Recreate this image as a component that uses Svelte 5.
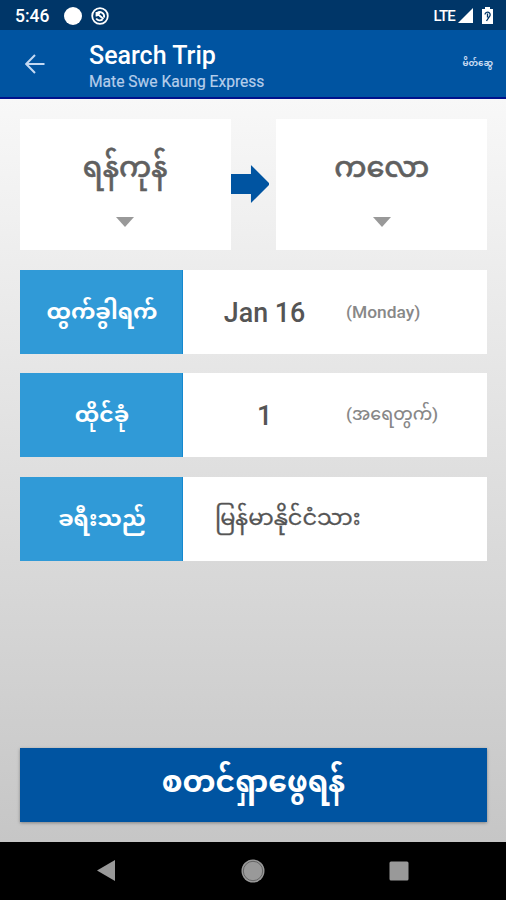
<script lang="ts">
  const places = ["ရန်ကုန်", "ကလော"];

  const rows = [
    { label: "ထွက်ခွါရက်", value: "Jan 16", note: "(Monday)" },
    { label: "ထိုင်ခုံ", value: "1", note: "(အရေတွက်)" },
  ];
</script>

<div class="screen">
  <div class="status">
    <span class="time">5:46</span>
    <svg class="dot" viewBox="0 0 18 18"><circle cx="9" cy="9" r="9" /></svg>
    <svg class="sync" viewBox="0 0 18 18">
      <circle cx="9" cy="9" r="7.8" />
      <path d="M5.200 11.500a4.300 4.300 0 0 0 6.300 1M13 10.500a4.300 4.300 0 0 0-7-4.300M5.500 6l7 6M5.500 9.500v-3.500h3.500" />
    </svg>
    <span class="lte">LTE</span>
    <svg class="signal" viewBox="0 0 16 16"><path d="M16 0v16H0z" /></svg>
    <svg class="battery" viewBox="0 0 11 17">
      <path class="shell" d="M3 2V0h5v2h3v15H0V2z" />
      <path class="mark" d="M3 7.500a2.600 2.600 0 1 1 4.500 2L4.500 14M5.500 6.500v4" />
    </svg>
  </div>

  <header>
    <button class="back" title="Back">
      <svg viewBox="0 0 20 20"><path d="M19.500 10H1.500M10 1 1.200 10l8.800 9" /></svg>
    </button>
    <div class="titles">
      <h1>Search Trip</h1>
      <p>Mate Swe Kaung Express</p>
    </div>
    <span class="mate">မိတ်ဆွေ</span>
  </header>

  <main>
    <div class="route">
      {#each places as place, i}
        {#if i > 0}
          <svg class="arrow" viewBox="0 0 39 38"><path d="M0 9h20V0l19 19-19 19v-9H0z" /></svg>
        {/if}
        <button class="place">
          <span>{place}</span>
          <svg class="caret" viewBox="0 0 18 10"><path d="M0 0h18l-9 10z" /></svg>
        </button>
      {/each}
    </div>

    {#each rows as row}
      <div class="row">
        <div class="label">{row.label}</div>
        <div class="value">{row.value}</div>
        <div class="note">{row.note}</div>
      </div>
    {/each}

    <div class="row">
      <div class="label">ခရီးသည်</div>
      <div class="nation">မြန်မာနိုင်ငံသား</div>
    </div>

    <button class="search">စတင်ရှာဖွေရန်</button>
  </main>

  <nav>
    <svg viewBox="0 0 24 24"><path d="M21 1v21L3 11.500z" /></svg>
    <svg viewBox="0 0 24 24">
      <circle cx="12" cy="12" r="11.500" />
      <circle class="ring" cx="12" cy="12" r="9.700" />
    </svg>
    <svg viewBox="0 0 24 24"><rect x="2.500" y="2.500" width="19" height="19" rx="1.500" /></svg>
  </nav>
</div>

<style>
  :global(body) {
    margin: 0;
  }

  .screen {
    display: flex;
    flex-direction: column;
    width: 506px;
    height: 900px;
    overflow: hidden;
    font-family: Roboto, "Noto Sans Myanmar", "Noto Sans", sans-serif;
  }

  button {
    border: none;
    padding: 0;
    font-family: inherit;
    cursor: pointer;
  }

  .status {
    display: flex;
    align-items: center;
    box-sizing: border-box;
    height: 30px;
    padding: 1px 13px 0 15px;
    background: #003668;
    color: white;
  }

  .time {
    width: 49px;
    font-size: 17.5px;
    font-weight: 500;
  }

  .dot {
    width: 18px;
    height: 18px;
    fill: white;
  }

  .sync {
    width: 18px;
    height: 18px;
    margin-left: 9px;
    fill: none;
    stroke: white;
    stroke-width: 1.8;
  }

  .lte {
    margin-left: auto;
    font-size: 15px;
    font-weight: 500;
    letter-spacing: -0.8px;
  }

  .signal {
    width: 15px;
    height: 15px;
    margin: 0 9px 0 3px;
    fill: white;
  }

  .battery {
    width: 11px;
    height: 17px;
  }

  .shell {
    fill: white;
  }

  .mark {
    fill: none;
    stroke: #003668;
    stroke-width: 1.3;
  }

  header {
    display: flex;
    box-sizing: border-box;
    height: 69px;
    padding: 0 13px 0 25px;
    border-bottom: 2px solid #00128c;
    background: #0054a1;
    color: white;
  }

  .back {
    width: 64px;
    background: none;
    text-align: left;
  }

  .back svg {
    display: block;
    width: 20px;
    height: 20px;
    margin-top: 1px;
    fill: none;
    stroke: #c3d9f3;
    stroke-width: 2;
  }

  h1 {
    margin: 11px 0 0;
    font-size: 25px;
    font-weight: 500;
    line-height: 30px;
  }

  p {
    margin: 1px 0 0;
    color: #b5cdea;
    font-size: 15.6px;
    line-height: 20px;
    -webkit-text-stroke: 0.2px #b5cdea;
  }

  .mate {
    margin: 23px 0 0 auto;
    color: #c8dbf2;
    font-size: 8.6px;
    font-weight: 700;
    line-height: 20px;
  }

  main {
    display: flex;
    flex: 1;
    flex-direction: column;
    gap: 19.5px;
    padding: 20px 19px 20px 20px;
    background: linear-gradient(#f8f8f8, #c6c6c6);
  }

  .route {
    display: flex;
    justify-content: space-between;
    align-items: center;
    height: 131px;
  }

  .place {
    display: flex;
    flex-direction: column;
    align-items: center;
    width: 211px;
    height: 131px;
    background: white;
    color: #606060;
    font-size: 28.8px;
    font-weight: 500;
    -webkit-text-stroke: 0.5px #606060;
  }

  .place span {
    height: 58px;
    margin-top: 40px;
    line-height: 16px;
  }

  .caret {
    width: 18px;
    height: 10px;
    fill: #999;
  }

  .arrow {
    width: 39px;
    height: 38px;
    margin: 0 7px 2px 0;
    fill: #0054a1;
  }

  .row {
    display: flex;
    align-items: center;
    height: 84px;
    background: white;
  }

  .label {
    box-sizing: border-box;
    width: 163px;
    height: 84px;
    padding-left: 2px;
    background: #309ad7;
    border-right: 1px solid #1488cf;
    color: white;
    font-size: 22px;
    font-weight: 700;
    line-height: 83px;
    text-align: center;
  }

  .value {
    width: 163px;
    padding-top: 2px;
    color: #555;
    font-size: 26.8px;
    font-weight: 500;
    text-align: center;
  }

  .note {
    padding-top: 1px;
    color: #888;
    font-size: 17.4px;
    font-weight: 500;
  }

  .nation {
    margin: 2px 0 0 32px;
    color: #555;
    font-size: 22.5px;
    -webkit-text-stroke: 0.3px #555;
  }

  .search {
    height: 74px;
    margin-top: auto;
    background: #0054a1;
    box-shadow: 0 1px 3px rgba(0, 0, 0, 0.35);
    color: white;
    font-size: 29.8px;
    font-weight: 700;
  }

  nav {
    display: flex;
    justify-content: space-between;
    align-items: center;
    height: 58px;
    padding: 0 95px 0 94px;
    background: black;
  }

  nav svg {
    width: 24px;
    height: 24px;
    fill: #999;
  }

  .ring {
    stroke: #555;
    stroke-width: 0.8;
  }
</style>
